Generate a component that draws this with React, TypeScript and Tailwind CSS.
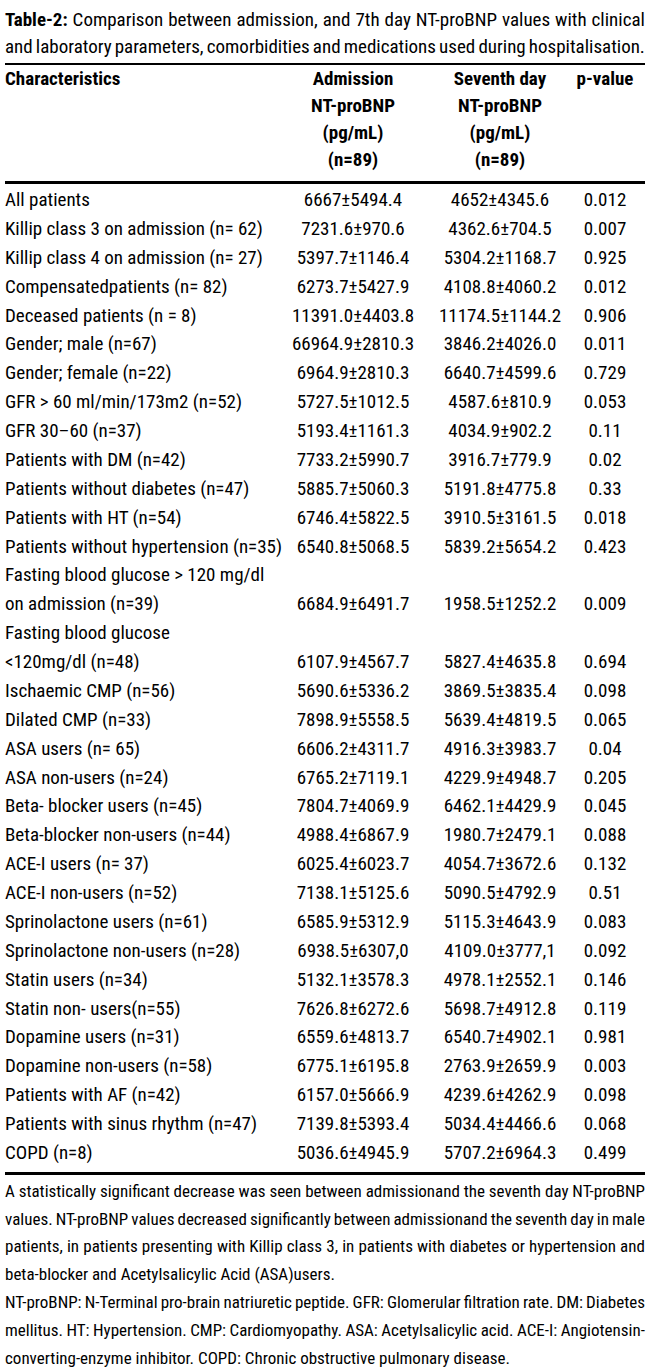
import React from "react";

type Row = { label: string[]; adm: string; sev: string; p: string };

const rows: Row[] = [
  { label: ["All patients"], adm: "6667±5494.4", sev: "4652±4345.6", p: "0.012" },
  { label: ["Killip class 3 on admission (n= 62)"], adm: "7231.6±970.6", sev: "4362.6±704.5", p: "0.007" },
  { label: ["Killip class 4 on admission (n= 27)"], adm: "5397.7±1146.4", sev: "5304.2±1168.7", p: "0.925" },
  { label: ["Compensatedpatients (n= 82)"], adm: "6273.7±5427.9", sev: "4108.8±4060.2", p: "0.012" },
  { label: ["Deceased patients (n = 8)"], adm: "11391.0±4403.8", sev: "11174.5±1144.2", p: "0.906" },
  { label: ["Gender; male (n=67)"], adm: "66964.9±2810.3", sev: "3846.2±4026.0", p: "0.011" },
  { label: ["Gender; female (n=22)"], adm: "6964.9±2810.3", sev: "6640.7±4599.6", p: "0.729" },
  { label: ["GFR > 60 ml/min/173m2 (n=52)"], adm: "5727.5±1012.5", sev: "4587.6±810.9", p: "0.053" },
  { label: ["GFR 30–60 (n=37)"], adm: "5193.4±1161.3", sev: "4034.9±902.2", p: "0.11" },
  { label: ["Patients with DM (n=42)"], adm: "7733.2±5990.7", sev: "3916.7±779.9", p: "0.02" },
  { label: ["Patients without diabetes (n=47)"], adm: "5885.7±5060.3", sev: "5191.8±4775.8", p: "0.33" },
  { label: ["Patients with HT (n=54)"], adm: "6746.4±5822.5", sev: "3910.5±3161.5", p: "0.018" },
  { label: ["Patients without hypertension (n=35)"], adm: "6540.8±5068.5", sev: "5839.2±5654.2", p: "0.423" },
  { label: ["Fasting blood glucose > 120 mg/dl", "on admission (n=39)"], adm: "6684.9±6491.7", sev: "1958.5±1252.2", p: "0.009" },
  { label: ["Fasting blood glucose", "<120mg/dl (n=48)"], adm: "6107.9±4567.7", sev: "5827.4±4635.8", p: "0.694" },
  { label: ["Ischaemic CMP (n=56)"], adm: "5690.6±5336.2", sev: "3869.5±3835.4", p: "0.098" },
  { label: ["Dilated CMP (n=33)"], adm: "7898.9±5558.5", sev: "5639.4±4819.5", p: "0.065" },
  { label: ["ASA users (n= 65)"], adm: "6606.2±4311.7", sev: "4916.3±3983.7", p: "0.04" },
  { label: ["ASA non-users (n=24)"], adm: "6765.2±7119.1", sev: "4229.9±4948.7", p: "0.205" },
  { label: ["Beta- blocker users (n=45)"], adm: "7804.7±4069.9", sev: "6462.1±4429.9", p: "0.045" },
  { label: ["Beta-blocker non-users (n=44)"], adm: "4988.4±6867.9", sev: "1980.7±2479.1", p: "0.088" },
  { label: ["ACE-I users (n= 37)"], adm: "6025.4±6023.7", sev: "4054.7±3672.6", p: "0.132" },
  { label: ["ACE-I non-users (n=52)"], adm: "7138.1±5125.6", sev: "5090.5±4792.9", p: "0.51" },
  { label: ["Sprinolactone users (n=61)"], adm: "6585.9±5312.9", sev: "5115.3±4643.9", p: "0.083" },
  { label: ["Sprinolactone non-users (n=28)"], adm: "6938.5±6307,0", sev: "4109.0±3777,1", p: "0.092" },
  { label: ["Statin users (n=34)"], adm: "5132.1±3578.3", sev: "4978.1±2552.1", p: "0.146" },
  { label: ["Statin non- users(n=55)"], adm: "7626.8±6272.6", sev: "5698.7±4912.8", p: "0.119" },
  { label: ["Dopamine users (n=31)"], adm: "6559.6±4813.7", sev: "6540.7±4902.1", p: "0.981" },
  { label: ["Dopamine non-users (n=58)"], adm: "6775.1±6195.8", sev: "2763.9±2659.9", p: "0.003" },
  { label: ["Patients with AF (n=42)"], adm: "6157.0±5666.9", sev: "4239.6±4262.9", p: "0.098" },
  { label: ["Patients with sinus rhythm (n=47)"], adm: "7139.8±5393.4", sev: "5034.4±4466.6", p: "0.068" },
  { label: ["COPD (n=8)"], adm: "5036.6±4945.9", sev: "5707.2±6964.3", p: "0.499" },
];

const cols = "grid grid-cols-[275px_146px_148px_62px]";

// spreads the words of one line across the full width, like justified print
function Justified({ text, lead }: { text: string; lead?: string }) {
  const words = text.split(" ");
  return (
    <div className="flex justify-between gap-x-[3px] whitespace-nowrap">
      {lead && <span className="font-bold">{lead}</span>}
      {words.map((w, i) => (
        <span key={i}>{w}</span>
      ))}
    </div>
  );
}

export default function App() {
  return (
    <div className="min-h-screen bg-white text-black font-['Roboto_Condensed','DejaVu_Sans_Condensed',sans-serif]">
      <div className="w-[650px] px-[5px] pt-[6px]">
        {/* caption */}
        <div className="text-[19px] leading-[27px]">
          <Justified lead="Table-2:" text="Comparison between admission, and 7th day NT-proBNP values with clinical" />
          <Justified text="and laboratory parameters, comorbidities and medications used during hospitalisation." />
        </div>

        <div className="mt-[3px] h-[2px] bg-black" />

        {/* header */}
        <div className={`${cols} text-[19px] leading-[27px] font-bold pb-[8px]`}>
          <div>Characteristics</div>
          <div className="text-center">
            <div>Admission</div>
            <div>NT-proBNP</div>
            <div>(pg/mL)</div>
            <div>(n=89)</div>
          </div>
          <div className="text-center">
            <div>Seventh day</div>
            <div>NT-proBNP</div>
            <div>(pg/mL)</div>
            <div>(n=89)</div>
          </div>
          <div className="text-center whitespace-nowrap">p-value</div>
        </div>

        <div className="h-[3px] bg-black" />

        {/* body */}
        <div className="pt-[2px] text-[19px] leading-[28.88px]">
          {rows.map((r, i) => (
            <div key={i} className={`${cols} items-end`}>
              <div className="whitespace-nowrap">
                {r.label.map((l) => (
                  <div key={l}>{l}</div>
                ))}
              </div>
              <div className="text-center whitespace-nowrap">{r.adm}</div>
              <div className="text-center whitespace-nowrap">{r.sev}</div>
              <div className="text-center whitespace-nowrap">{r.p}</div>
            </div>
          ))}
        </div>

        <div className="mt-[4px] h-[3px] bg-black" />

        {/* notes */}
        <div className="mt-[3px] text-[17px] leading-[27.8px]">
          <Justified text="A statistically significant decrease was seen between admissionand the seventh day NT-proBNP" />
          <Justified text="values. NT-proBNP values decreased significantly between admissionand the seventh day in male" />
          <Justified text="patients, in patients presenting with Killip class 3, in patients with diabetes or hypertension and" />
          <div>beta-blocker and Acetylsalicylic Acid (ASA)users.</div>
          <Justified text="NT-proBNP: N-Terminal pro-brain natriuretic peptide. GFR: Glomerular filtration rate. DM: Diabetes" />
          <Justified text="mellitus. HT: Hypertension. CMP: Cardiomyopathy. ASA: Acetylsalicylic acid. ACE-I: Angiotensin-" />
          <div>converting-enzyme inhibitor. COPD: Chronic obstructive pulmonary disease.</div>
        </div>
      </div>
    </div>
  );
}
